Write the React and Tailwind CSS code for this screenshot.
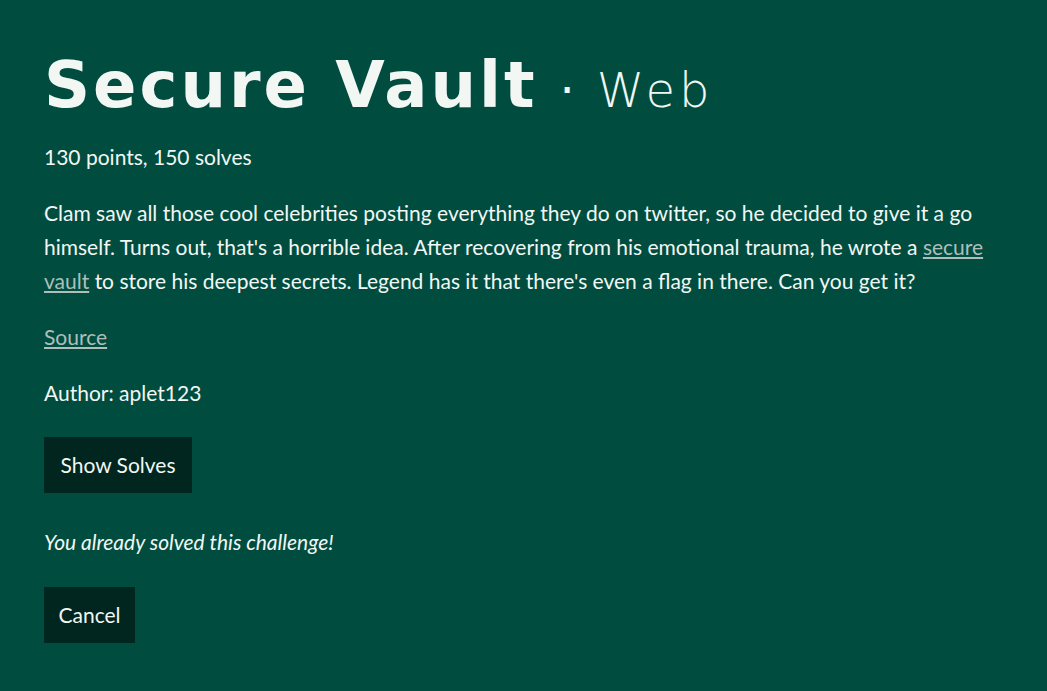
export default function App() {
  return (
    <div className="min-h-screen w-full bg-[#004d40] text-[#f2f7f4] font-['Lato','Open_Sans',sans-serif]">
      <div className="px-[44px] pt-[53px] pb-10">
        <h1 className="flex items-baseline h-[79px] leading-none">
          <span className="font-['DejaVu_Sans',sans-serif] font-bold text-[64px] tracking-[3px]">
            Secure Vault
          </span>
          <span className="ml-[22px] mr-[22px] text-[48px] font-['DejaVu_Sans',sans-serif]">·</span>
          <span className="font-['DejaVu_Sans',sans-serif] font-extralight text-[48px] tracking-[4px]">Web</span>
        </h1>
        <p className="mt-[8px] text-[21px] leading-[34px]">130 points, 150 solves</p>
        <p className="mt-[22px] text-[21px] leading-[34px] max-w-[960px]">
          Clam saw all those cool celebrities posting everything they do on twitter, so he decided to give it a go
          himself. Turns out, that's a horrible idea. After recovering from his emotional trauma, he wrote a{" "}
          <a href="#" className="underline text-[#aebfba]">
            secure vault
          </a>{" "}
          to store his deepest secrets. Legend has it that there's even a flag in there. Can you get it?
        </p>
        <p className="mt-[22px] text-[21px] leading-[34px]">
          <a href="#" className="underline text-[#aebfba]">
            Source
          </a>
        </p>
        <p className="mt-[22px] text-[21px] leading-[34px]">Author: aplet123</p>
        <button className="mt-[27px] block h-[56px] w-[148px] bg-[#00261f] text-[21px]">Show Solves</button>
        <p className="mt-[32px] text-[21px] leading-[34px] italic">You already solved this challenge!</p>
        <button className="mt-[28px] block h-[56px] w-[91px] bg-[#00261f] text-[21px]">Cancel</button>
      </div>
    </div>
  );
}
